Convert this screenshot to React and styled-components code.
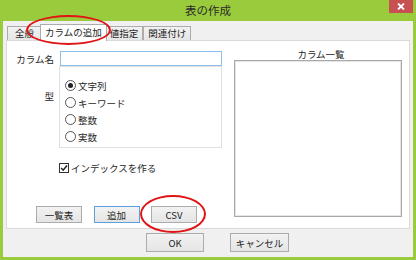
import React from 'react'
import styled, { createGlobalStyle } from 'styled-components'

const GlobalStyle = createGlobalStyle`
  html, body { margin: 0; padding: 0; }
  body {
    font-family: "Noto Sans CJK JP", "Noto Sans", sans-serif;
    font-size: 9.5px;
    color: #1e1e1e;
  }
  * { box-sizing: border-box; }
`

const Window = styled.div`
  position: relative;
  width: 416px;
  height: 260px;
  background: #9acb3d;
  padding: 0 3px 3px;
  display: flex;
  flex-direction: column;
`

const TitleBar = styled.div`
  height: 21px;
  display: grid;
  grid-template-columns: 1fr auto 1fr;
  align-items: start;
`

const Title = styled.div`
  grid-column: 2;
  font-size: 11.5px;
  line-height: 20px;
  color: #2b2b2b;
`

const CloseButton = styled.div`
  grid-column: 3;
  justify-self: end;
  width: 24px;
  height: 13px;
  background: #c75050;
  display: flex;
  align-items: center;
  justify-content: center;
`

const Client = styled.div`
  flex: 1;
  background: #f0f0f0;
  padding: 3px 3px 5px 3px;
  display: flex;
  flex-direction: column;
`

const TabStrip = styled.div`
  height: 16px;
  display: flex;
  align-items: flex-start;
  padding-left: 1px;
`

const Tab = styled.div`
  position: relative;
  z-index: ${p => (p.$active ? 2 : 1)};
  min-width: 35px;
  height: ${p => (p.$active ? 17 : 14)}px;
  margin: ${p => (p.$active ? '0 -2px 0' : '2px 0 0')};
  padding: 0 4px;
  border: 1px solid #acacac;
  border-bottom: none;
  background: ${p => (p.$active ? '#fff' : 'linear-gradient(#f2f2f2, #e6e6e6)')};
  text-align: center;
  line-height: ${p => (p.$active ? 15 : 13)}px;
  white-space: nowrap;
`

const Panel = styled.div`
  height: 189px;
  background: #fff;
  border: 1px solid #d9d9d9;
  display: flex;
`

const LeftCol = styled.div`
  width: 216px;
  padding: 10px 0 5px;
  display: flex;
  flex-direction: column;
`

const FieldGrid = styled.div`
  display: grid;
  grid-template-columns: 47px 163px;
  column-gap: 5px;
`

const Label = styled.div`
  text-align: right;
  line-height: 12px;
  padding-top: ${p => p.$top || 0}px;
  align-self: ${p => (p.$top ? 'start' : 'center')};
  white-space: nowrap;
`

const TextInput = styled.div`
  height: 15px;
  margin-left: 1px;
  border: 1px solid #8fbeec;
  background: #fff;
`

const GroupBox = styled.div`
  height: 82px;
  border: 1px solid #e0e0e0;
  padding: 10px 0 0 5px;
`

const RadioRow = styled.div`
  height: 17px;
  display: flex;
  align-items: center;
  gap: 2px;
  line-height: 12px;
`

const RadioCircle = styled.span`
  width: 11px;
  height: 11px;
  border-radius: 50%;
  border: 1px solid #555;
  background: #fff;
  display: flex;
  align-items: center;
  justify-content: center;

  &::after {
    content: '';
    width: 5px;
    height: 5px;
    border-radius: 50%;
    background: ${p => (p.$checked ? '#222' : 'transparent')};
  }
`

const CheckRow = styled.div`
  grid-column: 2;
  margin-top: 14px;
  display: flex;
  align-items: center;
  gap: 2px;
  line-height: 12px;
`

const CheckBox = styled.span`
  width: 10px;
  height: 10px;
  border: 1px solid #333;
  background: #fff;
  display: flex;
`

const PanelButtons = styled.div`
  margin-top: auto;
  padding-left: 29px;
  display: flex;
  gap: 11.5px;
`

const Button = styled.div`
  width: ${p => p.$w}px;
  height: ${p => p.$h}px;
  border: 1px solid ${p => (p.$primary ? '#5a9fe0' : '#acacac')};
  background: linear-gradient(#f2f2f2, #e5e5e5);
  display: flex;
  align-items: center;
  justify-content: center;
  line-height: 12px;
  color: #1e1e1e;
`

const RightCol = styled.div`
  margin-left: 11px;
  width: 168px;
  padding-top: 7px;
  display: flex;
  flex-direction: column;
`

const ListTitle = styled.div`
  text-align: center;
  line-height: 12px;
  padding-left: 6px;
`

const ListBox = styled.div`
  height: 157px;
  border: 1px solid #a8a8a8;
  box-shadow: inset 0 0 0 1px #e6e6e6;
  background: #fff;
`

const Footer = styled.div`
  margin-top: 4px;
  padding-left: 140px;
  display: flex;
  gap: 26px;
`

const Ellipse = styled.span`
  position: absolute;
  left: ${p => p.$x}px;
  top: ${p => p.$y}px;
  width: ${p => p.$w}px;
  height: ${p => p.$h}px;
  border: 2px solid #e01414;
  border-radius: 50%;
  pointer-events: none;
  z-index: 5;
`

const radios = [
  { label: '文字列', checked: true },
  { label: 'キーワード' },
  { label: '整数' },
  { label: '実数' },
]

const tabs = ['全般', 'カラムの追加', '値指定', '関連付け']

export default function App() {
  return (
    <>
      <GlobalStyle />
      <Window>
        <TitleBar>
          <Title>表の作成</Title>
          <CloseButton>
            <svg width="8" height="7" viewBox="0 0 8 7">
              <path d="M1 0.5 L7 6.5 M7 0.5 L1 6.5" stroke="#fff" strokeWidth="1.8" />
            </svg>
          </CloseButton>
        </TitleBar>
        <Client>
          <TabStrip>
            {tabs.map((t, i) => (
              <Tab key={t} $active={i === 1}>{t}</Tab>
            ))}
          </TabStrip>
          <Panel>
            <LeftCol>
              <FieldGrid>
                <Label>カラム名</Label>
                <TextInput />
                <Label $top={24}>型</Label>
                <GroupBox>
                  {radios.map(r => (
                    <RadioRow key={r.label}>
                      <RadioCircle $checked={r.checked} />
                      {r.label}
                    </RadioRow>
                  ))}
                </GroupBox>
                <CheckRow>
                  <CheckBox>
                    <svg width="8" height="8" viewBox="0 0 8 8">
                      <path d="M1.2 4 L3.2 6.2 L7 1.5" fill="none" stroke="#222" strokeWidth="1.5" />
                    </svg>
                  </CheckBox>
                  インデックスを作る
                </CheckRow>
              </FieldGrid>
              <PanelButtons>
                <Button $w={46} $h={17}>一覧表</Button>
                <Button $w={46} $h={17} $primary>追加</Button>
                <Button $w={46} $h={17}>CSV</Button>
              </PanelButtons>
            </LeftCol>
            <RightCol>
              <ListTitle>カラム一覧</ListTitle>
              <ListBox />
            </RightCol>
          </Panel>
          <Footer>
            <Button $w={58} $h={19}>OK</Button>
            <Button $w={59} $h={19}>キャンセル</Button>
          </Footer>
        </Client>
        <Ellipse $x={26} $y={15} $w={85} $h={30} />
        <Ellipse $x={140} $y={195} $w={66} $h={38} />
      </Window>
    </>
  )
}
